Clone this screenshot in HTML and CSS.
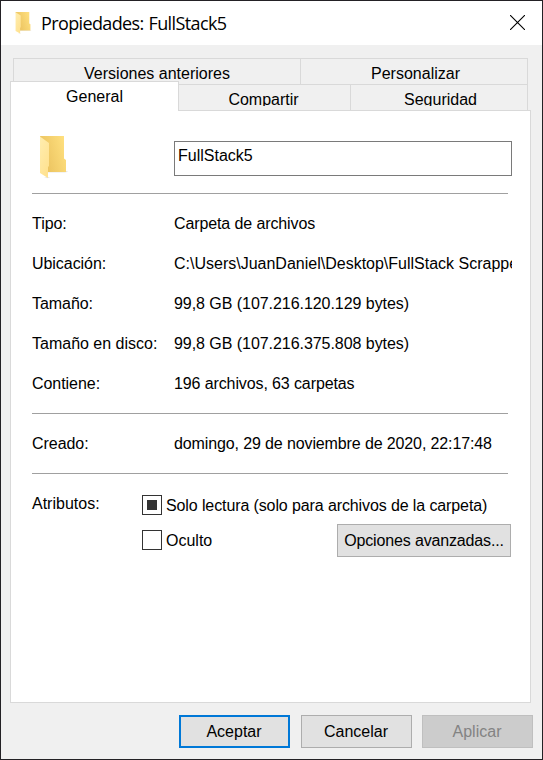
FILE: index.html
```html
<!DOCTYPE html>
<html lang="es">
<head>
<meta charset="utf-8">
<title>Propiedades: FullStack5</title>
<link rel="stylesheet" href="styles.css">
</head>
<body>
<div class="window">
  <header class="titlebar">
    <svg class="title-icon" width="16" height="22" viewBox="0 0 28 43" preserveAspectRatio="none"><use href="#folder"/></svg>
    <h1 class="title">Propiedades: FullStack5</h1>
    <svg class="close" width="15" height="15" viewBox="0 0 15 15"><path d="M0 0l15 15M15 0l-15 15" stroke="#000" stroke-width="1.1" fill="none"/></svg>
  </header>
  <main class="body">
    <nav class="tabs">
      <div class="tab-row back">
        <div class="tab versions"><span>Versiones anteriores</span></div>
        <div class="tab custom"><span>Personalizar</span></div>
      </div>
      <div class="tab-row front">
        <div class="tab general"><span>General</span></div>
        <div class="tab share"><span>Compartir</span></div>
        <div class="tab security"><span>Seguridad</span></div>
      </div>
    </nav>
    <section class="panel">
      <div class="name-row">
        <svg class="folder" width="28" height="43" viewBox="0 0 28 43">
          <defs>
            <linearGradient id="back" x1="0" y1="0.6" x2="1" y2="0.2"><stop offset="0" stop-color="#e9c05c"/><stop offset="1" stop-color="#ffe07f"/></linearGradient>
            <linearGradient id="flap" x1="0" y1="0" x2="0.6" y2="1"><stop offset="0" stop-color="#ffedaf"/><stop offset="1" stop-color="#ffe291"/></linearGradient>
          </defs>
          <g id="folder">
            <path d="M8 35h20l1 .7-3 .8H8zM5 41h5l1 .6-3 .6z" fill="#e7e7e7"/>
            <path d="M1 0h24v22.500l2 1.500v12H8z" fill="url(#back)"/>
            <path d="M1 .5L10 7v23l-1 1v11L1 37z" fill="url(#flap)"/>
          </g>
        </svg>
        <div class="name-field">FullStack5</div>
      </div>
      <hr>
      <dl class="info">
        <dt>Tipo:</dt><dd class="kind">Carpeta de archivos</dd>
        <dt>Ubicación:</dt><dd class="path">C:\Users\JuanDaniel\Desktop\FullStack Scrappe</dd>
        <dt>Tamaño:</dt><dd>99,8 GB (107.216.120.129 bytes)</dd>
        <dt class="disk">Tamaño en disco:</dt><dd>99,8 GB (107.216.375.808 bytes)</dd>
        <dt>Contiene:</dt><dd class="count">196 archivos, 63 carpetas</dd>
      </dl>
      <hr>
      <dl class="info created">
        <dt>Creado:</dt><dd class="date">domingo, 29 de noviembre de 2020, 22:17:48</dd>
      </dl>
      <hr>
      <div class="attributes">
        <div class="attr-label">Atributos:</div>
        <div class="attr-options">
          <div class="check"><i class="box mixed"></i><span class="readonly">Solo lectura (solo para archivos de la carpeta)</span></div>
          <div class="check hidden-row"><i class="box"></i><span>Oculto</span><div class="button advanced"><span>Opciones avanzadas...</span></div></div>
        </div>
      </div>
    </section>
    <footer class="actions">
      <div class="button default"><span>Aceptar</span></div>
      <div class="button cancel"><span>Cancelar</span></div>
      <div class="button disabled"><span>Aplicar</span></div>
    </footer>
  </main>
</div>
</body>
</html>
```
FILE: styles.css
```css
* { box-sizing: border-box; }
body { margin: 0; font: 16px/20px "Liberation Sans", Arial, sans-serif; color: #000; }
.window { width: 543px; height: 760px; border: 1px solid #232125; background: #f0f0f0; overflow: hidden; }
.titlebar { height: 44px; background: #fff; display: flex; align-items: center; padding: 0 17px 0 14px; }
.title { margin: 0 auto 0 10px; font: 18px/24px "Open Sans", "Noto Sans", sans-serif; letter-spacing: -0.62px; word-spacing: 0.8px; white-space: nowrap; }
.close { display: block; margin-top: -1px; }
.body { padding: 13px 0 0 9px; }
.tabs { width: 521px; }
.tab-row { display: flex; }
.tab { border: 1px solid #d9d9d9; border-bottom: 0; text-align: center; white-space: nowrap; }
.tab span { display: block; }
.back { height: 26px; margin: 0 3px; }
.back .tab { padding-top: 5px; }
.versions { width: 287px; border-right: 0; }
.custom { width: 228px; }
.custom span { margin-left: 3px; }
.front { height: 26px; align-items: flex-end; }
.general { width: 169px; height: 30px; margin-bottom: -1px; background: #fff; padding-top: 5px; position: relative; }
.front .share, .front .security { height: 26px; padding-top: 5px; background: #f0f0f0; }
.front .share span, .front .security span { height: 16px; overflow: hidden; }
.share { width: 171px; border-left: 0; border-right: 0; }
.share span { margin-right: 2px; }
.security { width: 178px; }
.security span { margin-left: 3px; }
.panel { width: 521px; height: 593px; border: 1px solid #d9d9d9; background: #fff; padding: 25px 18px 0 21px; }
.name-row { display: flex; height: 57px; }
.folder { margin: 0 0 0 7px; overflow: visible; }
.title-icon { overflow: visible; }
.name-field { margin: 5px 0 0 107px; width: 338px; height: 35px; border: 1px solid #7a7a7a; padding: 4px 3px; flex: none; }
hr { width: 476px; height: 1px; margin: 0; border: 0; background: #a0a0a0; }
.info { display: grid; grid-template-columns: 142px 338px; grid-auto-rows: 40px; align-items: center; margin: 10px 0 9px; }
dt, dd { margin: 0; white-space: nowrap; overflow: hidden; letter-spacing: -0.05px; }
.disk { letter-spacing: 0; }
.kind, .count { letter-spacing: -0.11px; }
.path { letter-spacing: 0; }
.date { letter-spacing: -0.12px; }
.attributes { display: flex; padding-top: 18px; }
.attr-label { width: 110px; padding-top: 2px; }
.attr-options { width: 369px; }
.check { display: flex; align-items: center; height: 26px; white-space: nowrap; }
.readonly { letter-spacing: -0.11px; padding-top: 1px; }
.hidden-row { height: 33px; margin-top: 6px; }
.hidden-row .box { margin-top: -1px; }
.box { width: 20px; height: 20px; border: 1px solid #333; margin-right: 4px; display: block; }
.mixed { padding: 4px; }
.mixed::before { content: ""; display: block; width: 10px; height: 10px; background: #333; }
.button { width: 111px; height: 33px; border: 1px solid #adadad; background: #e1e1e1; display: flex; align-items: center; justify-content: center; white-space: nowrap; }
.advanced { width: 174px; margin-left: auto; letter-spacing: -0.15px; }
.actions { display: flex; justify-content: flex-end; padding: 12px 9px 0 0; gap: 10px; }
.actions span { margin-right: 1px; }
.cancel { margin-left: 1px; }
.default { border: 2px solid #0078d7; }
.disabled { background: #ccc; border-color: #bfbfbf; color: #838383; }
```
